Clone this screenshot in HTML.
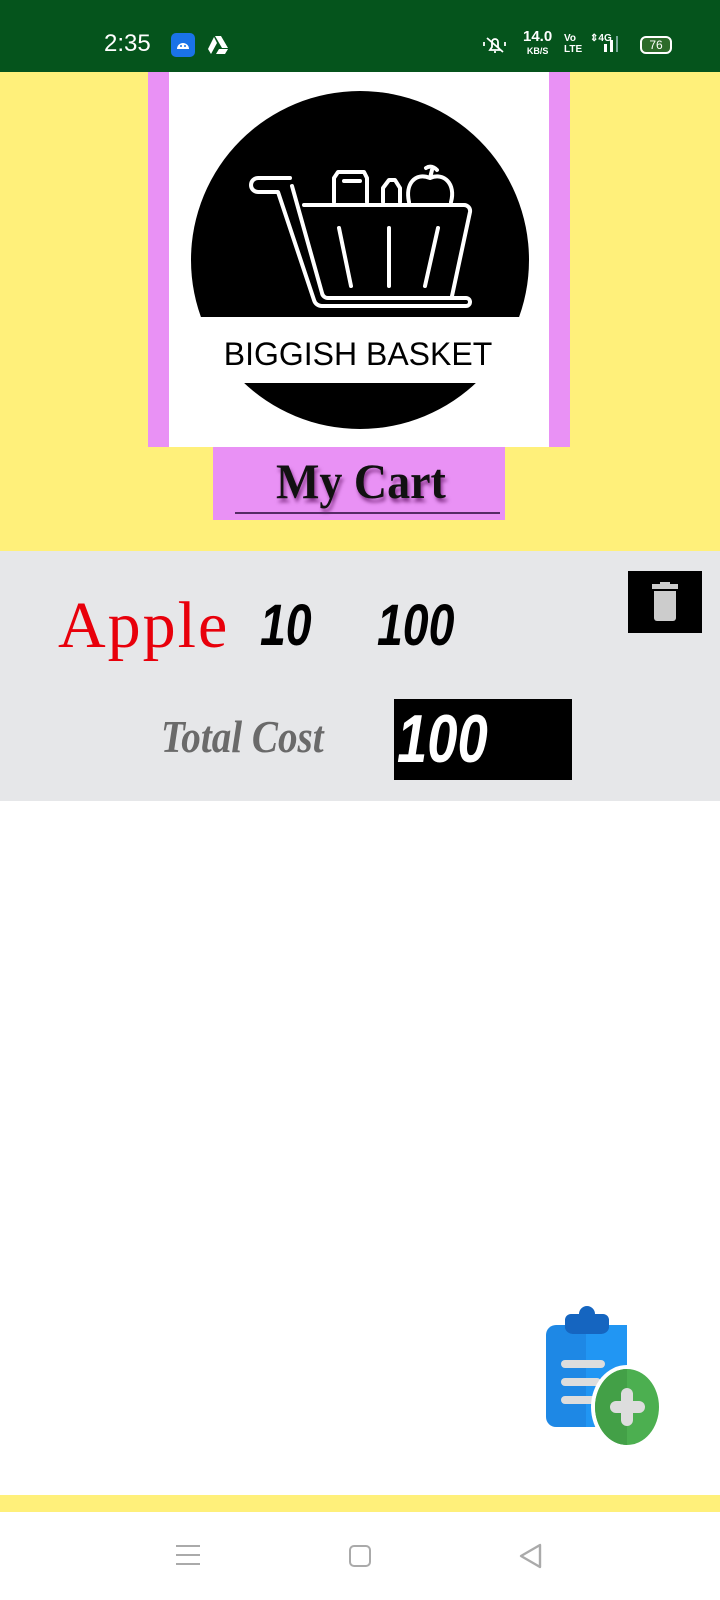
<!DOCTYPE html>
<html><head><meta charset="utf-8"><style>
*{margin:0;padding:0;box-sizing:border-box}
body{width:720px;height:1600px;position:relative;background:#fff;font-family:"Liberation Sans",sans-serif;overflow:hidden}
.a{position:absolute}
.n{font-family:'Liberation Sans Narrow','Liberation Sans',sans-serif;font-style:italic;font-weight:bold;transform:scaleX(.8);transform-origin:left}
</style></head><body>
<div class="a" style="left:0;top:0;width:720px;height:72px;background:#05541c"></div>
<div class="a" style="left:104px;top:30px;color:#fff;font-size:24px">2:35</div>
<div class="a" style="left:171px;top:33px;width:24px;height:24px;background:#1a73e8;border-radius:5px"></div>
<svg class="a" style="left:174px;top:36px" width="18" height="18" viewBox="0 0 18 18"><path d="M3 13a6 6 0 0 1 12 0z" fill="#fff"/><circle cx="7" cy="10" r="1" fill="#1a73e8"/><circle cx="11" cy="10" r="1" fill="#1a73e8"/></svg>
<svg class="a" style="left:207px;top:35px" width="22" height="20" viewBox="0 0 22 20"><path d="M8 1h6l7 12h-6zM7 2l3 6-6 11-3-5zM9 19l3-5h9l-3 5z" fill="#fff"/></svg>
<svg class="a" style="left:482px;top:34px" width="26" height="22" viewBox="0 0 26 22"><path d="M8 16h10l-2-3v-5a3 3 0 0 0-6 0v5zM12 18h2M5 4l16 14M2 8v4M23 8v4" fill="none" stroke="#fff" stroke-width="1.8"/></svg>
<div class="a" style="left:523px;top:30px;color:#fff;font-size:15px;font-weight:bold;line-height:13px;text-align:center">14.0<br><span style="font-size:9px">KB/S</span></div>
<div class="a" style="left:564px;top:33px;color:#fff;font-size:10px;font-weight:bold;line-height:11px">Vo<br>LTE</div>
<div class="a" style="left:590px;top:33px;color:#fff;font-size:10px;font-weight:bold">⇕4G</div>
<div class="a" style="left:604px;top:44px;width:3px;height:8px;background:#fff"></div>
<div class="a" style="left:610px;top:40px;width:3px;height:12px;background:#fff"></div>
<div class="a" style="left:616px;top:36px;width:2px;height:16px;background:#7a9"></div>
<div class="a" style="left:640px;top:36px;width:32px;height:18px;border:2px solid #fff;border-radius:6px;background:#2d6b2a;color:#fff;font-size:12px;text-align:center;line-height:14px">76</div>

<div class="a" style="left:0;top:72px;width:720px;height:479px;background:#fff07a"></div>
<div class="a" style="left:148px;top:72px;width:422px;height:375px;background:#e991f5"></div>
<div class="a" style="left:169px;top:72px;width:380px;height:375px;background:#fff;overflow:hidden">
<svg width="380" height="375" viewBox="169 72 380 375">
<circle cx="360" cy="260" r="169" fill="#000"/>
<rect x="180" y="317" width="360" height="66" fill="#fff"/>
<g fill="none" stroke="#fff" stroke-width="4" stroke-linejoin="round" stroke-linecap="round">
<path d="M290 178H258a7 7 0 0 0 0 14H278L314 300a8 8 0 0 0 8 6H466a4 4 0 0 0 0-8H328a6 6 0 0 1-6-5L292 186"/>
<path d="M304 205H464a6 6 0 0 1 6 7L452 296"/>
<path d="M339 228l12 58M389 228v58M438 228l-13 58"/>
<path d="M334 202v-24l4-6h26l3 6v24M344 181h16"/>
<path d="M383 202v-14l6-8h6l5 8v14"/>
<path d="M409 202c-4-18 6-30 21-24 14-6 26 6 21 24M430 178l2-8M426 168c6-4 11 2 11 2"/>
</g>
<text x="358" y="365" text-anchor="middle" font-family="Liberation Sans" font-size="32" fill="#000">BIGGISH BASKET</text>
</svg></div>
<div class="a" style="left:213px;top:447px;width:292px;height:73px;background:#e991f5"></div>
<div class="a" style="left:276px;top:452px;font-family:'Liberation Serif',serif;font-size:50px;font-weight:bold;color:#111;text-shadow:2px 4px 4px rgba(80,0,80,.6);transform:scaleX(.92);transform-origin:left">My Cart</div>
<div class="a" style="left:235px;top:512px;width:265px;height:2px;background:#552a66"></div>

<div class="a" style="left:0;top:551px;width:720px;height:250px;background:#e6e7e9"></div>
<div class="a" style="left:58px;top:588px;font-family:'Liberation Serif',serif;font-size:66px;color:#e8000b;letter-spacing:2px">Apple</div>
<div class="a n" style="left:260px;top:592px;font-size:58px;color:#000">10</div>
<div class="a n" style="left:377px;top:592px;font-size:58px;color:#000">100</div>
<div class="a" style="left:628px;top:571px;width:74px;height:62px;background:#000"></div>
<svg class="a" style="left:650px;top:582px" width="30" height="40" viewBox="0 0 30 40"><rect x="2" y="2" width="26" height="5" fill="#ccc"/><rect x="10" y="0" width="10" height="3" fill="#ccc"/><path d="M4 9h22v27a3 3 0 0 1-3 3H7a3 3 0 0 1-3-3z" fill="#ccc"/></svg>
<div class="a" style="left:161px;top:710px;font-family:'Liberation Serif',serif;font-style:italic;font-weight:bold;font-size:46px;color:#6a6a6a;transform:scaleX(.85);transform-origin:left">Total Cost</div>
<div class="a" style="left:394px;top:699px;width:178px;height:81px;background:#000"></div>
<div class="a n" style="left:397px;top:700px;font-size:68px;color:#fff">100</div>

<svg class="a" style="left:540px;top:1300px" width="130" height="150" viewBox="540 1300 130 150">
<rect x="546" y="1325" width="81" height="102" rx="10" fill="#1e88e5"/>
<rect x="586" y="1325" width="41" height="102" fill="#2196f3"/>
<path d="M565 1328v-8a6 6 0 0 1 6-6h8a8 8 0 0 1 16 0h8a6 6 0 0 1 6 6v8a8 8 0 0 1-8 6h-28a8 8 0 0 1-8-6z" fill="#1565c0"/>
<rect x="561" y="1360" width="44" height="8" rx="4" fill="#ddd"/>
<rect x="561" y="1378" width="40" height="8" rx="4" fill="#ddd"/>
<rect x="561" y="1396" width="36" height="8" rx="4" fill="#ddd"/>
<ellipse cx="627" cy="1407" rx="36" ry="42" fill="#fff"/>
<ellipse cx="627" cy="1407" rx="32" ry="38" fill="#4caf50"/>
<path d="M627 1369a32 38 0 0 0 0 76z" fill="#43a047"/>
<rect x="621" y="1388" width="12" height="38" rx="6" fill="#ddd"/>
<rect x="610" y="1401" width="35" height="12" rx="6" fill="#ddd"/>
</svg>

<div class="a" style="left:0;top:1495px;width:720px;height:17px;background:#fff07a"></div>
<div class="a" style="left:176px;top:1545px;width:24px;height:2px;background:#aaa;box-shadow:0 9px 0 #aaa,0 18px 0 #aaa"></div>
<div class="a" style="left:349px;top:1545px;width:22px;height:22px;border:2px solid #aaa;border-radius:5px"></div>
<svg class="a" style="left:518px;top:1542px" width="26" height="28" viewBox="0 0 26 28"><path d="M22 3v22L3 14z" fill="none" stroke="#aaa" stroke-width="2.4" stroke-linejoin="round"/></svg>
</body></html>
